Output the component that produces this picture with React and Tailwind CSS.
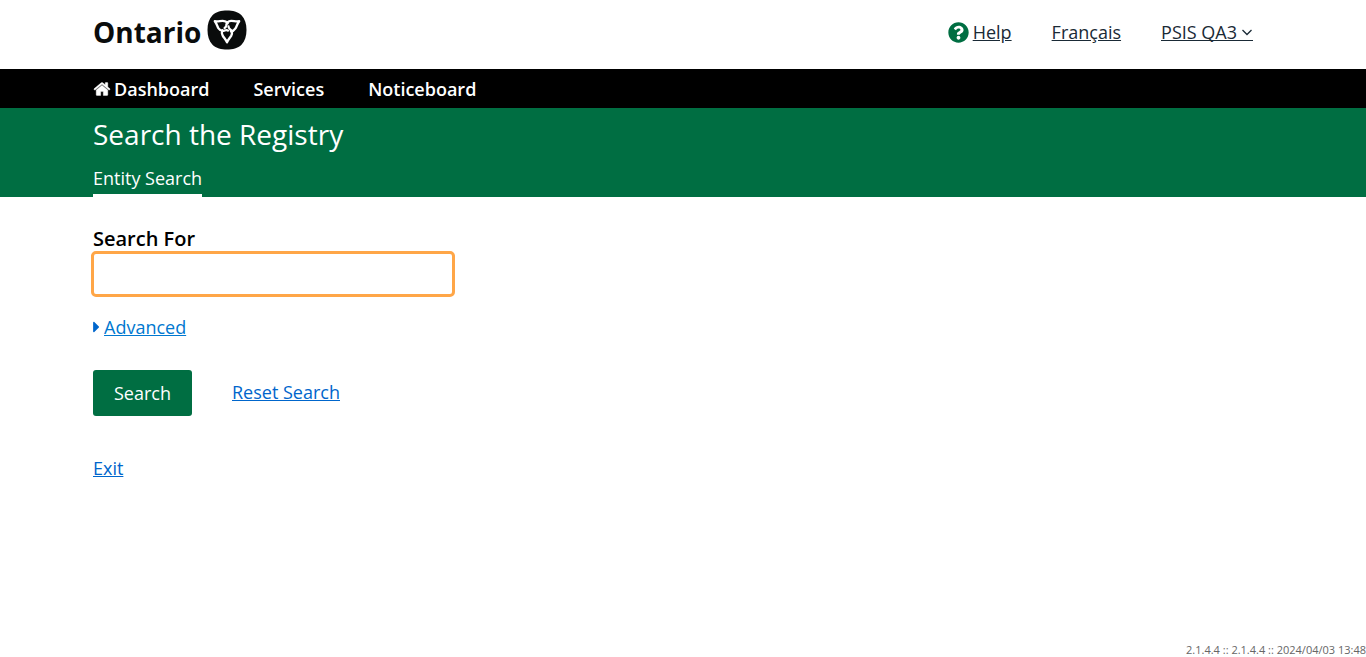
import { FaQuestionCircle, FaCaretRight } from "react-icons/fa";

const petal = "M15.400 20.200C14.500 22 14.800 23.900 15.700 25.600C16.900 27.800 18.800 29.400 20 32.400C21.200 29.400 23.100 27.800 24.300 25.600C25.600 22.800 24.900 20.600 23 19.200C22 18.400 21.400 17.400 21.500 16.400";

function Trillium() {
  return (
    <svg viewBox="0 0 40 40" className="size-10" aria-hidden="true">
      <path
        d="M20 .5C25.500 .5 31 1.800 34.500 5.300C38 8.800 39.500 14 39.500 20C39.500 26 38 31.200 34.500 34.700C31 38.200 25.500 39.500 20 39.500C14.500 39.500 9 38.200 5.500 34.700C2 31.200 .5 26 .5 20C.5 14 2 8.800 5.500 5.300C9 1.800 14.500 .5 20 .5Z"
        fill="#0a0c0c"
      />
      <g fill="none" stroke="#fff" strokeWidth="2.300" strokeLinejoin="round" strokeLinecap="round">
        <path d={petal} />
        <path d={petal} transform="rotate(120 20 18.300)" />
        <path d={petal} transform="rotate(240 20 18.300)" />
      </g>
    </svg>
  );
}

function HomeIcon() {
  return (
    <svg viewBox="0 0 1792 1792" className="size-[18px]" fill="currentColor" stroke="currentColor" strokeWidth="40" aria-hidden="true">
      <path d="M1472 992v480q0 26-19 45t-45 19h-384v-384h-256v384h-384q-26 0-45-19t-19-45v-480q0-1 .5-3t.5-3l575-474 575 474q1 2 1 6zm223-69l-62 74q-8 9-21 11h-3q-13 0-21-7l-692-577-692 577q-12 8-24 7-13-2-21-11l-62-74q-8-10-7-23.500t11-21.500l719-599q32-26 76-26t76 26l244 204v-195q0-14 9-23t23-9h192q14 0 23 9t9 23v408l219 182q10 8 11 21.500t-7 23.500z" />
    </svg>
  );
}

const wrap = "mx-auto w-full max-w-[1180px]";

export default function App() {
  return (
    <div className="flex min-h-screen flex-col bg-white font-['Open_Sans',sans-serif] text-lg text-black">
      <header className={`${wrap} flex h-[69px] items-start justify-between pr-5`}>
        <a href="#" className="flex items-center gap-1.5 pt-2.5" aria-label="Ontario">
          <span className="pt-1 text-[28px] leading-9 font-bold text-[#0a0c0c]">Ontario</span>
          <Trillium />
        </a>
        <div className="flex items-center gap-10 pt-[18px] leading-7 text-[#1a2a36]">
          <a href="#" className="flex items-center gap-1">
            <FaQuestionCircle className="size-[21px] text-[#006e42]" />
            <span className="underline">Help</span>
          </a>
          <a href="#" className="underline">Français</a>
          <button type="button" className="flex items-center gap-1 border-b border-current leading-4">
            PSIS QA3
            <svg viewBox="0 0 12 12" className="size-3" fill="none" stroke="currentColor" strokeWidth="1.300" aria-hidden="true">
              <path d="M1.500 4L6 8.500L10.500 4" />
            </svg>
          </button>
        </div>
      </header>

      <nav className="bg-black">
        <div className={`${wrap} flex h-[39px] items-center gap-11 pt-px font-semibold text-white`}>
          <a href="#" className="flex items-center gap-[3px]">
            <HomeIcon />
            Dashboard
          </a>
          <a href="#">Services</a>
          <a href="#">Noticeboard</a>
        </div>
      </nav>

      <section className="bg-[#006e42] text-white">
        <div className={`${wrap} flex h-[89px] flex-col items-start justify-between pt-1.5`}>
          <h1 className="text-[28px] leading-10">Search the Registry</h1>
          <a href="#" className="border-b-3 border-white pb-1 leading-6">Entity Search</a>
        </div>
      </section>

      <main className={`${wrap} flex flex-1 flex-col items-start pt-7`}>
        <label htmlFor="search-for" className="text-xl leading-7 font-semibold">Search For</label>
        <input
          id="search-for"
          type="text"
          className="-mx-0.5 -mt-0.5 h-[46px] w-[364px] max-w-full rounded-[5px] border-3 border-[#ffa647] px-3 outline-none"
        />
        <button type="button" className="mt-4 flex items-center gap-1 leading-7 text-[#0078d0]">
          <FaCaretRight className="h-[18px] w-[7px] text-[#0066cc]" />
          <span className="underline">Advanced</span>
        </button>
        <div className="mt-[29px] flex items-center gap-10">
          <button type="submit" className="h-[46px] rounded-[3px] bg-[#006e42] px-[21px] text-white">Search</button>
          <a href="#" className="pb-0.5 text-[#0066cc] underline">Reset Search</a>
        </div>
        <a href="#" className="mt-[38px] leading-7 text-[#0066cc] underline">Exit</a>
      </main>

      <footer className="text-right text-[11px] leading-3.5 text-[#666]">2.1.4.4 :: 2.1.4.4 :: 2024/04/03 13:48</footer>
    </div>
  );
}
